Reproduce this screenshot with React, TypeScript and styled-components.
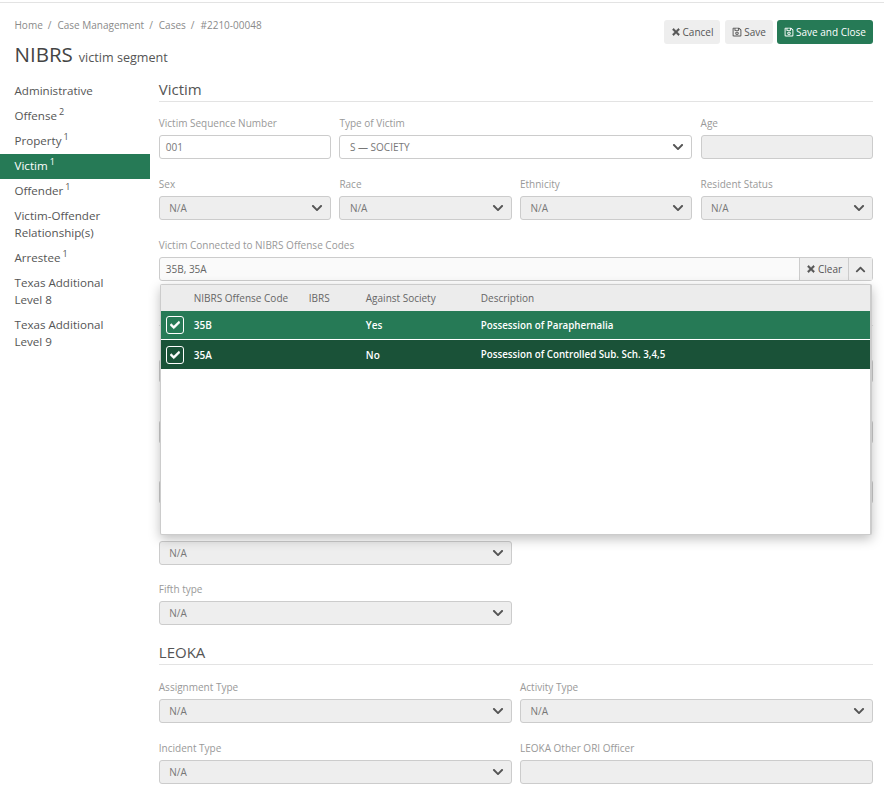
import React from "react";
import styled, { createGlobalStyle } from "styled-components";
import { FaCheck, FaChevronDown, FaChevronUp, FaRegSave, FaTimes } from "react-icons/fa";

const Global = createGlobalStyle`
  html, body { margin: 0; padding: 0; background: #fff; overflow: hidden; }
  body { font-family: "Open Sans", "Liberation Sans", sans-serif; color: #555; }
  * { box-sizing: border-box; }
`;

const Page = styled.div`
  width: 884px;
  height: 802px;
  overflow: hidden;
  border-top: 1px solid transparent;
`;
const TopRule = styled.div`
  height: 2px;
  border-bottom: 1px solid #e3e3e3;
`;
const Header = styled.header`
  display: flex;
  justify-content: space-between;
  align-items: flex-start;
  height: 76px;
  padding: 0 11px 0 14.5px;
`;
const Crumbs = styled.nav`
  display: flex;
  gap: 5px;
  margin-top: 15px;
  font-size: 10px;
  line-height: 14px;
  color: #8a8a8a;
`;
const CrumbSep = styled.span`
  margin-right: 1px;
`;
const Title = styled.h1`
  margin: 8px 0 0;
  font-weight: 400;
  font-size: 20.5px;
  line-height: 28px;
  color: #444;
`;
const Sub = styled.small`
  font-size: 12.6px;
  margin-left: 6px;
  color: #555;
`;
const Actions = styled.div`
  display: flex;
  margin-top: 17px;
`;
const Btn = styled.button<{ $primary?: boolean; $w: number; $gapLeft?: number }>`
  display: inline-flex;
  align-items: center;
  justify-content: center;
  gap: 2px;
  height: 24px;
  width: ${(p) => p.$w}px;
  margin-left: ${(p) => p.$gapLeft ?? 0}px;
  padding: 0;
  border: 0;
  border-radius: 3px;
  font-family: inherit;
  font-size: 10px;
  background: ${(p) => (p.$primary ? "#267a56" : "#eeeeee")};
  color: ${(p) => (p.$primary ? "#fff" : "#555")};
`;
const CloseIcon = styled(FaTimes)`
  width: 10px;
  height: 10px;
  stroke: currentColor;
  stroke-width: 24px;
`;
const SaveIcon = styled(FaRegSave)`
  width: 10px;
  height: 10px;
`;
const Body = styled.div`
  display: grid;
  grid-template-columns: 150px 1fr;
`;
const Side = styled.ul`
  list-style: none;
  margin: 0;
  padding: 0;
`;
const SideItem = styled.li<{ $active?: boolean }>`
  padding: 2.5px 40px 5.5px 14.5px;
  font-size: 11.6px;
  line-height: 17px;
  background: ${(p) => (p.$active ? "#267a56" : "transparent")};
  color: ${(p) => (p.$active ? "#fff" : "#555")};
`;
const Sup = styled.sup`
  font-size: 9px;
  line-height: 0;
  margin-left: 2px;
  vertical-align: 5px;
`;
const Main = styled.main`
  padding: 0 11px 0 8.8px;
`;
const Section = styled.section<{ $top: number }>`
  margin-top: ${(p) => p.$top}px;
`;
const Heading = styled.h2<{ $gap?: number }>`
  margin: 0 0 ${(p) => p.$gap ?? 14.5}px;
  height: 23px;
  font-weight: 400;
  font-size: 15px;
  line-height: 21px;
  color: #555;
  border-bottom: 1px solid #e3e3e3;
`;
const Grid = styled.div<{ $cols: number; $rowGap?: number }>`
  display: grid;
  grid-template-columns: repeat(${(p) => p.$cols}, minmax(0, 1fr));
  column-gap: 8.2px;
  row-gap: ${(p) => p.$rowGap ?? 17.5}px;
`;
const Field = styled.div<{ $span?: number }>`
  position: relative;
  grid-column: span ${(p) => p.$span ?? 1};
`;
const Label = styled.label`
  display: block;
  height: 15px;
  margin-bottom: 4px;
  font-size: 10px;
  line-height: 14px;
  color: #999;
  white-space: nowrap;
`;
const Control = styled.div<{ $disabled?: boolean }>`
  display: flex;
  align-items: center;
  justify-content: space-between;
  height: 24px;
  padding: 0 7px 0 9.5px;
  border: 1px solid #ccc;
  border-radius: 3px;
  font-size: 10px;
  color: #777;
  background: ${(p) => (p.$disabled ? "#eeeeee" : "#fff")};
`;
const Input = styled(Control)`
  padding-left: 6px;
`;
const Chevron = styled(FaChevronDown)`
  width: 12px;
  height: 12px;
  color: #555;
`;
const Combo = styled.div`
  display: flex;
  height: 24px;
  border: 1px solid #ccc;
  border-radius: 3px;
  font-size: 10px;
  color: #666;
  background: #fafafa;
`;
const ComboValue = styled.div`
  flex: 1;
  display: flex;
  align-items: center;
  padding-left: 6px;
`;
const ComboBtn = styled.div<{ $w: number }>`
  display: flex;
  align-items: center;
  justify-content: center;
  gap: 2px;
  width: ${(p) => p.$w}px;
  border-left: 1px solid #ccc;
  background: #eeeeee;
  color: #555;
`;
const Dropdown = styled.div`
  position: absolute;
  top: 46px;
  left: 1px;
  right: 1px;
  height: 251px;
  z-index: 5;
  background: #fff;
  border: 1px solid #ccc;
  border-right-width: 2px;
  border-radius: 2px;
  box-shadow: 0 4px 12px rgba(0, 0, 0, 0.25);
`;
const TableRow = styled.div<{ $tone: "head" | "light" | "dark" }>`
  display: grid;
  grid-template-columns: 33px 115px 57px 115px 1fr;
  align-items: center;
  font-size: 10px;
  height: ${(p) => (p.$tone === "head" ? 26 : p.$tone === "light" ? 28 : 29)}px;
  margin-bottom: ${(p) => (p.$tone === "light" ? 1 : 0)}px;
  font-weight: ${(p) => (p.$tone === "head" ? 400 : 600)};
  background: ${(p) =>
    p.$tone === "head" ? "#ececec" : p.$tone === "light" ? "#267a56" : "#1a5238"};
  color: ${(p) => (p.$tone === "head" ? "#666" : "#fff")};
`;
const Description = styled.span`
  font-size: 9.75px;
`;
const CheckBox = styled.span`
  display: flex;
  align-items: center;
  justify-content: center;
  width: 18px;
  height: 18px;
  margin-left: 5px;
  border: 1px solid #fff;
  border-radius: 3px;
`;
const Tick = styled(FaCheck)`
  width: 10px;
  height: 10px;
  stroke: currentColor;
  stroke-width: 30px;
`;

const sideItems: [string, number?][] = [
  ["Administrative"],
  ["Offense", 2],
  ["Property", 1],
  ["Victim", 1],
  ["Offender", 1],
  ["Victim-Offender Relationship(s)"],
  ["Arrestee", 1],
  ["Texas Additional Level 8"],
  ["Texas Additional Level 9"],
];

const NaSelect = ({ label = "\u00a0" }: { label?: string }) => (
  <Field>
    <Label>{label}</Label>
    <Control $disabled>
      N/A
      <Chevron />
    </Control>
  </Field>
);

export default function App() {
  return (
    <Page>
      <Global />
      <TopRule />
      <Header>
        <div>
          <Crumbs>
            <span>Home</span>
            <CrumbSep>/</CrumbSep>
            <span>Case Management</span>
            <CrumbSep>/</CrumbSep>
            <span>Cases</span>
            <CrumbSep>/</CrumbSep>
            <span>#2210-00048</span>
          </Crumbs>
          <Title>
            NIBRS<Sub>victim segment</Sub>
          </Title>
        </div>
        <Actions>
          <Btn $w={56}>
            <CloseIcon />
            Cancel
          </Btn>
          <Btn $w={48} $gapLeft={5}>
            <SaveIcon />
            Save
          </Btn>
          <Btn $primary $w={96} $gapLeft={4}>
            <SaveIcon />
            Save and Close
          </Btn>
        </Actions>
      </Header>
      <Body>
        <Side>
          {sideItems.map(([name, n]) => (
            <SideItem key={name} $active={name === "Victim"}>
              {name}
              {n ? <Sup>{n}</Sup> : null}
            </SideItem>
          ))}
        </Side>
        <Main>
          <Section $top={0}>
            <Heading $gap={14}>Victim</Heading>
            <Grid $cols={4} $rowGap={18}>
              <Field>
                <Label>Victim Sequence Number</Label>
                <Input>001</Input>
              </Field>
              <Field $span={2}>
                <Label>Type of Victim</Label>
                <Control>
                  S — SOCIETY
                  <Chevron />
                </Control>
              </Field>
              <Field>
                <Label>Age</Label>
                <Input $disabled />
              </Field>
              <NaSelect label="Sex" />
              <NaSelect label="Race" />
              <NaSelect label="Ethnicity" />
              <NaSelect label="Resident Status" />
              <Field $span={4}>
                <Label>Victim Connected to NIBRS Offense Codes</Label>
                <Combo>
                  <ComboValue>35B, 35A</ComboValue>
                  <ComboBtn $w={49}>
                    <CloseIcon />
                    Clear
                  </ComboBtn>
                  <ComboBtn $w={24}>
                    <FaChevronUp size={11} />
                  </ComboBtn>
                </Combo>
                <Dropdown>
                  <TableRow $tone="head">
                    <span />
                    <span>NIBRS Offense Code</span>
                    <span>IBRS</span>
                    <span>Against Society</span>
                    <span>Description</span>
                  </TableRow>
                  <TableRow $tone="light">
                    <CheckBox>
                      <Tick />
                    </CheckBox>
                    <span>35B</span>
                    <span />
                    <span>Yes</span>
                    <Description>Possession of Paraphernalia</Description>
                  </TableRow>
                  <TableRow $tone="dark">
                    <CheckBox>
                      <Tick />
                    </CheckBox>
                    <span>35A</span>
                    <span />
                    <span>No</span>
                    <Description>Possession of Controlled Sub. Sch. 3,4,5</Description>
                  </TableRow>
                </Dropdown>
              </Field>
            </Grid>
          </Section>
          <Section $top={21.5}>
            <Heading>{"\u00a0"}</Heading>
            <Grid $cols={2}>
              <NaSelect />
              <NaSelect />
              <NaSelect />
              <NaSelect />
              <NaSelect />
              <NaSelect />
              <NaSelect />
              <span />
              <NaSelect label="Fifth type" />
            </Grid>
          </Section>
          <Section $top={16.5}>
            <Heading $gap={15.5}>LEOKA</Heading>
            <Grid $cols={2}>
              <NaSelect label="Assignment Type" />
              <NaSelect label="Activity Type" />
              <NaSelect label="Incident Type" />
              <Field>
                <Label>LEOKA Other ORI Officer</Label>
                <Input $disabled />
              </Field>
            </Grid>
          </Section>
        </Main>
      </Body>
    </Page>
  );
}
